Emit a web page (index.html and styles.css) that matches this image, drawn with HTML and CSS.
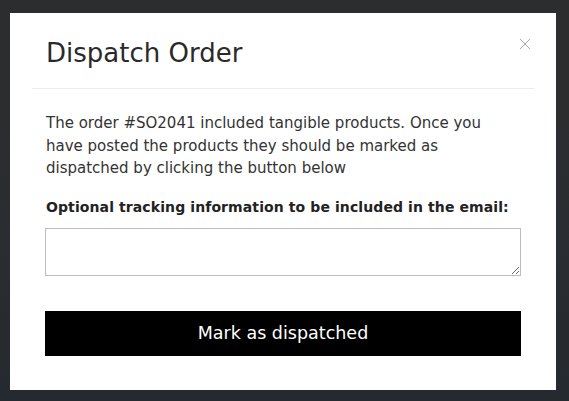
FILE: index.html
```html
<!DOCTYPE html>
<html>
<head>
<meta charset="utf-8">
<link rel="stylesheet" href="styles.css">
</head>
<body>
<div class="modal">
  <div class="modal-header">
    <h2 class="modal-title">Dispatch Order</h2>
    <button class="close" aria-label="Close">
      <svg width="12" height="12" viewBox="0 0 12 12"><path d="M1 1L11 11M11 1L1 11" stroke="#a8a8a8" stroke-width="1" fill="none"/></svg>
    </button>
  </div>
  <div class="modal-body">
    <p class="intro">The order #SO2041 included tangible products. Once you have posted the products they should be marked as dispatched by clicking the button below</p>
    <label class="label" for="tracking">Optional tracking information to be included in the email:</label>
    <textarea id="tracking" class="tracking"></textarea>
    <button class="dispatch">Mark as dispatched</button>
  </div>
</div>
</body>
</html>
```
FILE: styles.css
```css
html, body {
  margin: 0;
  padding: 0;
  height: 100%;
}
body {
  background: linear-gradient(180deg, #2c2d2e 0%, #2a2d31 60%, #252a30 100%);
  font-family: "DejaVu Sans", "Open Sans", sans-serif;
  color: #222;
  overflow: hidden;
}
.modal {
  margin: 13px 0 0 10px;
  width: 546px;
  height: 377px;
  background: #fff;
  padding: 0 22px;
  box-sizing: border-box;
}
.modal-header {
  height: 76px;
  border-bottom: 1px solid #ececec;
  display: flex;
  align-items: center;
  justify-content: space-between;
  padding: 0 3px 0 14px;
  box-sizing: border-box;
}
.modal-title {
  margin: 0;
  font-size: 26px;
  font-weight: 400;
  color: #2a2a2a;
  padding-top: 4px;
}
.close {
  background: none;
  border: 0;
  padding: 0;
  margin-top: -14px;
  width: 12px;
  height: 12px;
  display: flex;
}
.modal-body {
  padding: 23px 13px 0 13px;
}
.intro {
  margin: 0 0 0 1px;
  font-size: 15px;
  line-height: 22.5px;
  color: #333;
}
.label {
  display: block;
  margin: 19px 0 13px 1px;
  font-size: 14px;
  letter-spacing: 0.1px;
  font-weight: 700;
  color: #222;
}
.tracking {
  display: block;
  width: 476px;
  height: 48px;
  box-sizing: border-box;
  border: 1px solid #bdbdbd;
  border-radius: 0;
  margin: 0;
  padding: 4px;
  font-family: inherit;
}
.dispatch {
  display: block;
  margin-top: 35px;
  width: 476px;
  height: 45px;
  background: #000;
  color: #fff;
  border: 0;
  font-family: inherit;
  font-size: 17.5px;
  font-weight: 400;
}
```
